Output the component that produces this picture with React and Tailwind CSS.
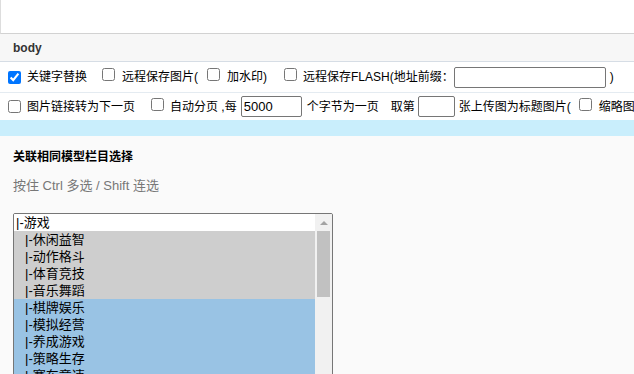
import React from 'react';

const cjk = "font-['Liberation_Sans','Noto_Sans_CJK_SC',sans-serif]";

const Check = ({ checked }) => (
  <input
    type="checkbox"
    defaultChecked={checked}
    className="w-[13px] h-[13px] m-0 shrink-0 accent-[#0075ff]"
  />
);

const Field = ({ className, value }) => (
  <input
    type="text"
    defaultValue={value}
    className={`h-[21px] border border-[#767676] rounded-[2px] bg-white px-[2px] text-[13px] text-black outline-none ${className}`}
  />
);

const items = [
  { label: '|-游戏', tone: 'none', indent: false },
  { label: '|-休闲益智', tone: 'gray', indent: true },
  { label: '|-动作格斗', tone: 'gray', indent: true },
  { label: '|-体育竞技', tone: 'gray', indent: true },
  { label: '|-音乐舞蹈', tone: 'gray', indent: true },
  { label: '|-棋牌娱乐', tone: 'blue', indent: true },
  { label: '|-模拟经营', tone: 'blue', indent: true },
  { label: '|-养成游戏', tone: 'blue', indent: true },
  { label: '|-策略生存', tone: 'blue', indent: true },
  { label: '|-赛车竞速', tone: 'blue', indent: true },
  { label: '|-射击冒险', tone: 'blue', indent: true },
];

export default function App() {
  return (
    <div className={`w-[634px] h-[374px] overflow-hidden bg-white text-black ${cjk}`}>
      {/* top blank strip */}
      <div className="h-[34px] border-l border-l-[#dddddd] border-b border-b-[#d2d2d2]" />

      {/* section bar */}
      <div className="h-[28px] bg-[#f7f7f7] border-b border-b-[#d6dde5] flex items-center px-[13px] text-[12px] font-bold text-[#333]">
        body
      </div>

      {/* options row 1 */}
      <div className="h-[31px] border-b border-b-[#e4ebf1] flex items-center pl-[8px] text-[12px] whitespace-nowrap">
        <Check checked />
        <span className="ml-[6px]">关键字替换</span>
        <span className="ml-[15px]"><Check /></span>
        <span className="ml-[7px]">远程保存图片(</span>
        <span className="ml-[9px]"><Check /></span>
        <span className="ml-[7px]">加水印)</span>
        <span className="ml-[17px]"><Check /></span>
        <span className="ml-[6px]">远程保存FLASH(地址前缀：</span>
        <Field className="w-[152px] ml-0" />
        <span className="ml-[4px]">)</span>
      </div>

      {/* options row 2 */}
      <div className="h-[27px] flex items-center pl-[8px] text-[12px] whitespace-nowrap">
        <Check />
        <span className="ml-[6px]">图片链接转为下一页</span>
        <span className="ml-[16px]"><Check /></span>
        <span className="ml-[6px]">自动分页 ,每</span>
        <Field className="w-[61px] ml-[4px]" value="5000" />
        <span className="ml-[5px]">个字节为一页</span>
        <span className="ml-[12px]">取第</span>
        <Field className="w-[37px] ml-[3px]" />
        <span className="ml-[4px]">张上传图为标题图片(</span>
        <span className="ml-[8px]"><Check /></span>
        <span className="ml-[7px]">缩略图</span>
      </div>

      {/* info band */}
      <div className="h-[16px] bg-[#c9eefc]" />

      {/* relation panel */}
      <div className="bg-[#fafafa] h-[238px] px-[13px] pt-[13px]">
        <div className="text-[12px] leading-[17px] font-bold text-black">关联相同模型栏目选择</div>
        <div className="mt-[11px] text-[13px] leading-[18px] text-[#777]">按住 Ctrl 多选 / Shift 连选</div>

        <div className="mt-[18px] w-[320px] h-[200px] border border-[#767676] rounded-t-[2px] bg-white flex overflow-hidden">
          <div className="flex-1 flex flex-col text-[13px] leading-[17px]">
            {items.map((it) => (
              <div
                key={it.label}
                className={`h-[17px] shrink-0 ${it.indent ? 'pl-[11px]' : 'pl-[2px]'} ${
                  it.tone === 'gray' ? 'bg-[#cecece]' : it.tone === 'blue' ? 'bg-[#99c3e4]' : 'bg-white'
                }`}
              >
                {it.label}
              </div>
            ))}
          </div>
          <div className="w-[17px] bg-[#f1f1f1] flex flex-col items-center">
            <div className="h-[17px] flex items-center justify-center">
              <svg width="8" height="4" viewBox="0 0 8 4">
                <path d="M0 4 L4 0 L8 4 Z" fill="#a3a3a3" />
              </svg>
            </div>
            <div className="w-[13px] h-[66px] bg-[#c1c1c1]" />
          </div>
        </div>
      </div>
    </div>
  );
}
